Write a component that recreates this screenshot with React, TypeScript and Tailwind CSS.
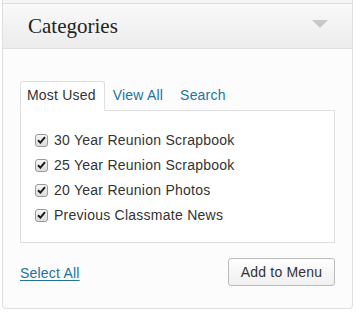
import React from 'react';

const items = [
  '30 Year Reunion Scrapbook',
  '25 Year Reunion Scrapbook',
  '20 Year Reunion Photos',
  'Previous Classmate News',
];

function Check() {
  return (
    <span className="flex h-[13px] w-[13px] items-center justify-center rounded-[3px] border border-[#9a9a9a] bg-gradient-to-b from-[#f6f6f6] to-[#dcdcdc]">
      <svg width="9" height="8" viewBox="0 0 9 8">
        <path d="M1 4.2 L3.4 6.6 L8 1.2" fill="none" stroke="#1a1a1a" strokeWidth="2" />
      </svg>
    </span>
  );
}

export default function App() {
  return (
    <div className="h-[314px] w-[357px] bg-white font-['Liberation_Sans',Arial,sans-serif] text-[#333]">
      <div className="ml-[2px] w-[351px]">
        <div className="h-[4px] border-x border-b border-[#dfdfdf] bg-[#f5f5f5]" />
        <div className="flex h-[45px] items-center justify-between border-x border-b border-[#dfdfdf] bg-gradient-to-b from-[#f9f9f9] to-[#ececec] pl-[25px] pr-[24px]">
          <h3 className="font-['Liberation_Serif',Georgia,serif] text-[21px] leading-none text-[#222]">Categories</h3>
          <svg width="16" height="8" viewBox="0 0 16 8" className="mb-[4px]">
            <path d="M0 0 H16 L8 8 Z" fill="#c8c8c8" />
          </svg>
        </div>
        <div className="rounded-b-[4px] border-x border-b border-[#dfdfdf] bg-[#fcfcfc] px-[17px] pb-[22px] pt-[32px]">
          <div className="flex items-end text-[14px] tracking-[0.2px]">
            <div className="relative -mb-px rounded-t-[3px] border border-b-white border-[#dfdfdf] bg-white pb-[4px] pl-[6px] pr-[8px] pt-[3px] text-[#333]">
              Most Used
            </div>
            <span className="ml-[8px] pb-[4px] text-[#21759b]">View All</span>
            <span className="ml-[17px] pb-[4px] text-[#21759b]">Search</span>
          </div>
          <div className="flex h-[133px] flex-col gap-[7px] border border-[#dfdfdf] bg-white pl-[14px] pt-[20px]">
            {items.map((t) => (
              <label key={t} className="flex h-[18px] items-center gap-[6px] text-[14px] tracking-[0.25px] text-[#333]">
                <Check />
                <span>{t}</span>
              </label>
            ))}
          </div>
          <div className="mt-[15px] flex items-center justify-between">
            <a className="mt-[2px] text-[14px] tracking-[0.2px] text-[#21759b] underline underline-offset-2">Select All</a>
            <button className="h-[28px] w-[107px] rounded-[3px] border border-[#bbb] bg-gradient-to-b from-[#fefefe] to-[#f0f0f0] text-[14px] tracking-[0.2px] text-[#333]">
              Add to Menu
            </button>
          </div>
        </div>
      </div>
    </div>
  );
}
